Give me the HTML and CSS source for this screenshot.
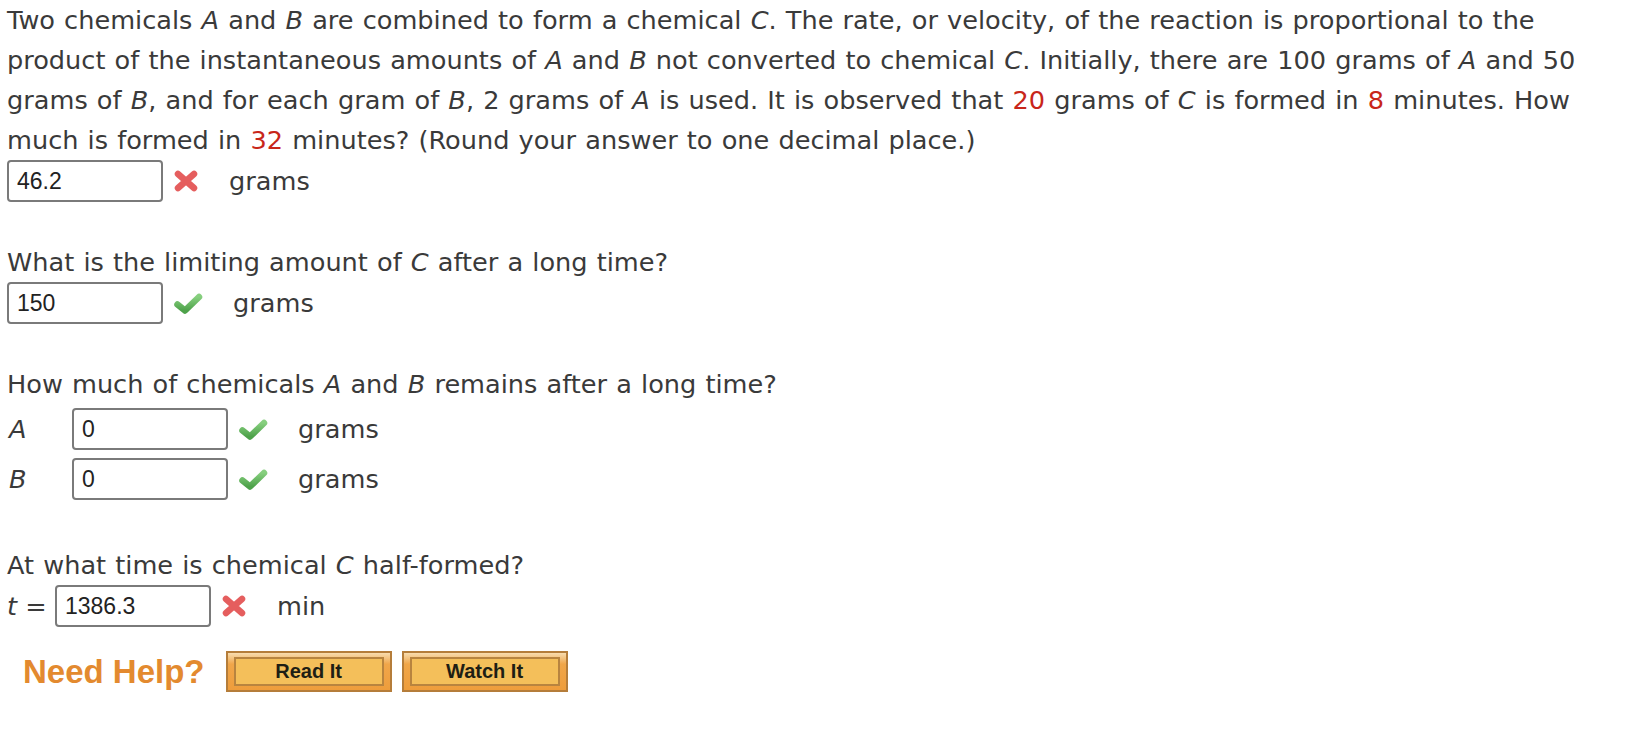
FILE: index.html
```html
<!DOCTYPE html>
<html>
<head>
<meta charset="utf-8">
<link rel="stylesheet" href="styles.css">
</head>
<body>
<svg width="0" height="0" class="defs">
  <defs>
    <linearGradient id="chk" x1="0" y1="0" x2="0" y2="1">
      <stop offset="0" stop-color="#86cf7e"/>
      <stop offset="1" stop-color="#4ea24a"/>
    </linearGradient>
  </defs>
</svg>
<div class="question">
  <p class="prompt">Two chemicals <i>A</i> and <i>B</i> are combined to form a chemical <i>C</i>. The rate, or velocity, of the reaction is proportional to the product of the instantaneous amounts of <i>A</i> and <i>B</i> not converted to chemical <i>C</i>. Initially, there are 100 grams of <i>A</i> and 50 grams of <i>B</i>, and for each gram of <i>B</i>, 2 grams of <i>A</i> is used. It is observed that <span class="red">20</span> grams of <i>C</i> is formed in <span class="red">8</span> minutes. How much is formed in <span class="red">32</span> minutes? (Round your answer to one decimal place.)</p>
  <div class="answer-row">
    <span class="field">46.2</span>
    <svg class="icon cross" viewBox="0 0 26 22"><path d="M5 4 L21 18 M21 4 L5 18"/></svg>
    <span class="unit">grams</span>
  </div>

  <p class="prompt gap">What is the limiting amount of <i>C</i> after a long time?</p>
  <div class="answer-row">
    <span class="field">150</span>
    <svg class="icon check" viewBox="0 0 30 24"><path d="M4.5 13.5 L12 19.5 L26 6"/></svg>
    <span class="unit u2">grams</span>
  </div>

  <p class="prompt gap">How much of chemicals <i>A</i> and <i>B</i> remains after a long time?</p>
  <div class="labeled">
    <div class="answer-row">
      <span class="label"><i>A</i></span>
      <span class="field">0</span>
      <svg class="icon check" viewBox="0 0 30 24"><path d="M4.5 13.5 L12 19.5 L26 6"/></svg>
      <span class="unit u3">grams</span>
    </div>
    <div class="answer-row">
      <span class="label"><i>B</i></span>
      <span class="field">0</span>
      <svg class="icon check" viewBox="0 0 30 24"><path d="M4.5 13.5 L12 19.5 L26 6"/></svg>
      <span class="unit u3">grams</span>
    </div>
  </div>

  <p class="prompt gap last">At what time is chemical <i>C</i> half-formed?</p>
  <div class="answer-row">
    <span class="tlabel"><i>t</i> =</span>
    <span class="field">1386.3</span>
    <svg class="icon cross" viewBox="0 0 26 22"><path d="M5 4 L21 18 M21 4 L5 18"/></svg>
    <span class="unit">min</span>
  </div>

  <div class="help">
    <span class="need">Need Help?</span>
    <span class="btn"><span class="btn-in">Read It</span></span>
    <span class="btn"><span class="btn-in">Watch It</span></span>
  </div>
</div>
</body>
</html>
```

FILE: styles.css
```css
html, body {
  margin: 0;
  padding: 0;
  background: #ffffff;
}
body {
  font-family: "DejaVu Sans", Verdana, sans-serif;
  color: #3a3a3a;
}
.defs {
  position: absolute;
}
.question {
  padding: 0 0 0 7px;
  width: 1592px;
}
.prompt {
  margin: 0;
  font-size: 25.6px;
  line-height: 40px;
  word-spacing: 1px;
}
.prompt i {
  font-style: italic;
}
.red {
  color: #c8261a;
}
.gap {
  margin-top: 40px;
}
.last {
  margin-top: 45px;
}
.answer-row {
  display: flex;
  align-items: center;
  height: 42px;
}
.field {
  box-sizing: border-box;
  width: 156px;
  height: 42px;
  border: 2px solid #7a7a7a;
  border-radius: 4px;
  padding: 0 8px;
  font-family: "Liberation Sans", Arial, sans-serif;
  font-size: 23px;
  line-height: 38px;
  color: #222;
}
.icon {
  margin-left: 10px;
}
.cross {
  width: 26px;
  height: 22px;
  fill: none;
}
.cross path {
  stroke: #e55e5e;
  stroke-width: 6.5;
  stroke-linecap: round;
}
.check {
  width: 30px;
  height: 24px;
  fill: none;
}
.check path {
  stroke: url(#chk);
  stroke-width: 6.5;
  stroke-linecap: round;
  stroke-linejoin: round;
}
.unit {
  font-size: 25.6px;
  margin-left: 30px;
}
.u2 {
  margin-left: 30px;
}
.labeled {
  margin-top: 4px;
  display: flex;
  flex-direction: column;
  gap: 8px;
}
.label {
  width: 63px;
  font-size: 25.6px;
  padding-left: 2px;
}
.tlabel {
  width: 48px;
  font-size: 25.6px;
}
.help {
  display: flex;
  align-items: center;
  margin-top: 24px;
  padding-left: 16px;
}
.need {
  font-family: "Liberation Sans", Arial, sans-serif;
  font-weight: bold;
  font-size: 33px;
  color: #e38a2f;
  margin-right: 21px;
}
.btn {
  box-sizing: border-box;
  width: 166px;
  height: 41px;
  border: 2px solid #b57d3a;
  background: linear-gradient(#f8dcae 0, #f0a64a 30%, #ee9d3c 100%);
  padding: 4px 6px;
  margin-right: 10px;
  display: flex;
}
.btn-in {
  flex: 1;
  border: 2px solid #b8843f;
  background: #f4bf5a;
  font-family: "Liberation Sans", Arial, sans-serif;
  font-weight: bold;
  font-size: 20px;
  color: #1e1e14;
  display: flex;
  align-items: center;
  justify-content: center;
}
```
